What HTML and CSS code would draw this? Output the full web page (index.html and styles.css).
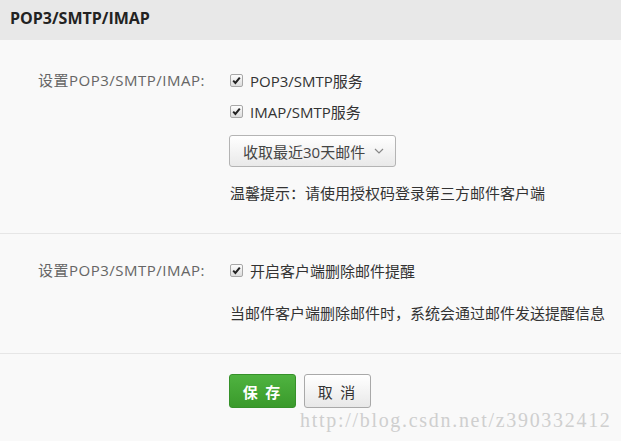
FILE: index.html
```html
<!DOCTYPE html>
<html lang="zh">
<head>
<meta charset="utf-8">
<link rel="stylesheet" href="styles.css">
</head>
<body>
<div class="page">
  <div class="header">POP3/SMTP/IMAP</div>
  <div class="section sec1">
    <div class="label">设置POP3/SMTP/IMAP:</div>
    <div class="field">
      <label class="check-row"><span class="cb"><svg viewBox="0 0 13 13" width="13" height="13"><path d="M3.2 6.6 L5.4 9 L9.8 3.6" fill="none" stroke="#222" stroke-width="2"/></svg></span>POP3/SMTP服务</label>
      <label class="check-row"><span class="cb"><svg viewBox="0 0 13 13" width="13" height="13"><path d="M3.2 6.6 L5.4 9 L9.8 3.6" fill="none" stroke="#222" stroke-width="2"/></svg></span>IMAP/SMTP服务</label>
      <div class="select">收取最近30天邮件<svg class="chev" viewBox="0 0 10 6" width="10" height="6"><path d="M1 1 L5 5 L9 1" fill="none" stroke="#888" stroke-width="1.2"/></svg></div>
      <div class="tip">温馨提示：请使用授权码登录第三方邮件客户端</div>
    </div>
  </div>
  <div class="section sec2">
    <div class="label">设置POP3/SMTP/IMAP:</div>
    <div class="field">
      <label class="check-row"><span class="cb"><svg viewBox="0 0 13 13" width="13" height="13"><path d="M3.2 6.6 L5.4 9 L9.8 3.6" fill="none" stroke="#222" stroke-width="2"/></svg></span>开启客户端删除邮件提醒</label>
      <div class="info">当邮件客户端删除邮件时，系统会通过邮件发送提醒信息</div>
    </div>
  </div>
  <div class="actions">
    <button class="btn btn-save">保 存</button>
    <button class="btn btn-cancel">取 消</button>
  </div>
  <div class="watermark">http://blog.csdn.net/z390332412</div>
</div>
</body>
</html>
```
FILE: styles.css
```css
html, body {
  margin: 0;
  padding: 0;
}
body {
  background: #f9f9f9;
  font-family: "Open Sans", "Noto Sans CJK SC", sans-serif;
  color: #333;
  width: 621px;
  height: 441px;
  overflow: hidden;
}
.page {
  position: relative;
  height: 441px;
}
.header {
  height: 40px;
  line-height: 37px;
  background: #e8e8e8;
  padding-left: 10px;
  font-size: 16px;
  font-weight: bold;
  color: #222;
}
.section {
  display: flex;
  border-bottom: 1px solid #e6e6e6;
  padding-bottom: 25px;
}
.sec1 { padding-top: 25px; }
.sec2 { padding-top: 21px; }
.label {
  width: 192px;
  padding-left: 38px;
  box-sizing: content-box;
  font-size: 15px;
  line-height: 31px;
  color: #666;
  letter-spacing: 0.5px;
}
.field {
  display: flex;
  flex-direction: column;
  align-items: flex-start;
}
.check-row {
  display: flex;
  align-items: center;
  height: 31px;
  font-size: 15px;
  color: #333;
}
.cb {
  width: 11px;
  height: 11px;
  border: 1px solid #a8a8a8;
  border-radius: 2px;
  background: linear-gradient(#fdfdfd, #dcdcdc);
  margin-right: 7px;
  position: relative;
  display: inline-block;
}
.cb svg {
  position: absolute;
  left: -1px;
  top: -1px;
}
.select {
  margin-top: 8px;
  margin-left: -1px;
  height: 30px;
  width: 152px;
  border: 1px solid #b4b4b4;
  border-radius: 3px;
  background: linear-gradient(#ffffff, #e9e9e9);
  display: flex;
  align-items: center;
  padding-left: 13px;
  box-sizing: content-box;
  font-size: 15px;
  color: #444;
}
.chev {
  margin-left: 9px;
}
.tip, .info {
  font-size: 15px;
  line-height: 30px;
  color: #333;
}
.tip { margin-top: 11px; }
.info { margin-top: 12px; }
.actions {
  display: flex;
  gap: 8px;
  padding: 20px 0 0 229px;
}
.btn {
  height: 34px;
  width: 67px;
  border-radius: 3px;
  font-family: "Noto Sans CJK SC", sans-serif;
  font-size: 15px;
  padding: 0;
  letter-spacing: 2px;
  cursor: pointer;
}
.btn-save {
  background: linear-gradient(#4fb340, #3a9a2b);
  border: 1px solid #36912a;
  color: #fff;
  font-weight: bold;
}
.btn-cancel {
  background: linear-gradient(#ffffff, #e8e8e8);
  border: 1px solid #a9a9a9;
  color: #333;
}
.watermark {
  position: absolute;
  left: 300px;
  top: 409px;
  font-family: "Liberation Serif", serif;
  font-size: 20px;
  color: #cfcfcf;
  letter-spacing: 1.7px;
}
```
